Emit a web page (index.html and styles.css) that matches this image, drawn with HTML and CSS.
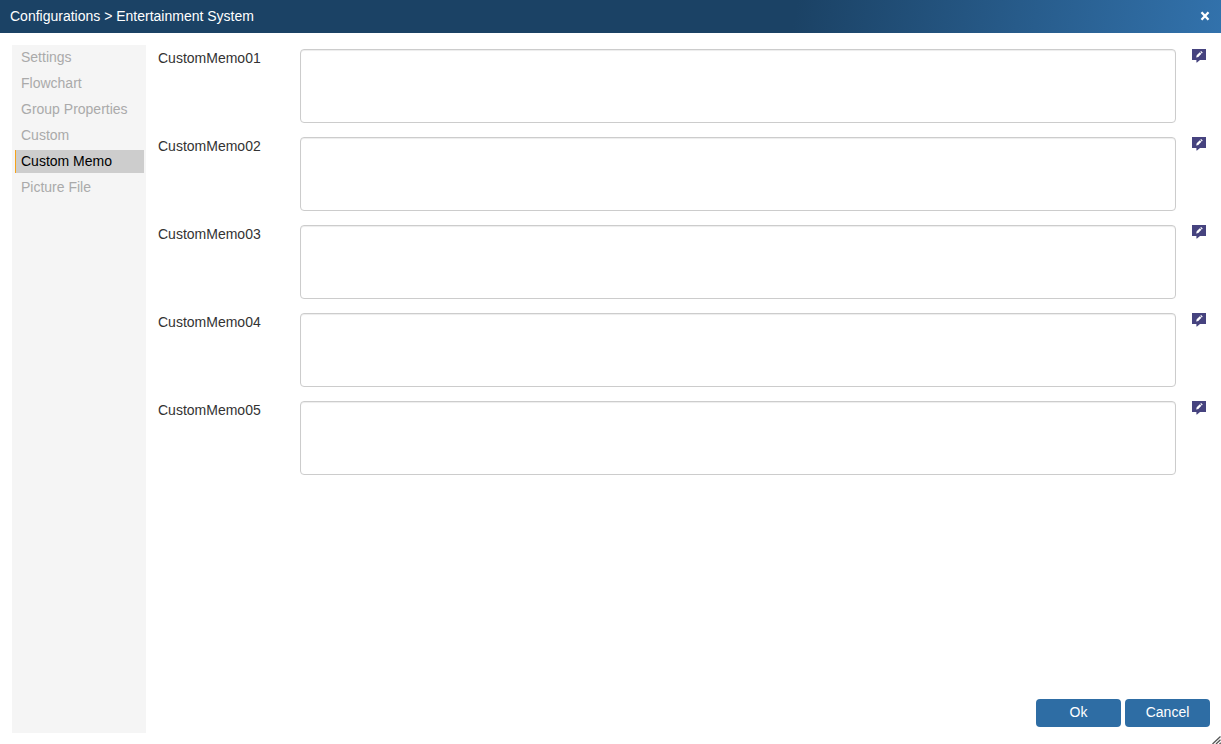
FILE: index.html
```html
<!DOCTYPE html>
<html lang="en">
<head>
<meta charset="utf-8">
<title>Configurations</title>
<link rel="stylesheet" href="styles.css">
</head>
<body>
<svg class="sprite" aria-hidden="true">
  <symbol id="note" viewBox="0 0 14 14">
    <path d="M0 0H14V11H8L5 13.600H4.400V11H0Z" fill="#46437f"/>
    <path d="M4.200 8.400L4.700 6.200L7.800 3.200L9.400 4.800L6.300 7.900ZM8.300 2.800L9.100 2.100L10.700 3.600L9.900 4.400Z" fill="#fff"/>
  </symbol>
</svg>
<div class="dialog">
  <header class="titlebar">
    <h1 class="title">Configurations &gt; Entertainment System</h1>
    <button class="close" type="button" aria-label="Close">
      <svg width="10" height="10" viewBox="0 0 10 10"><path d="M1.500 1.200L8.500 8.800M8.500 1.200L1.500 8.800" stroke="#fff" stroke-width="2.300"/></svg>
    </button>
  </header>
  <div class="content">
    <nav class="sidebar">
      <a class="tab" href="#">Settings</a>
      <a class="tab" href="#">Flowchart</a>
      <a class="tab" href="#">Group Properties</a>
      <a class="tab" href="#">Custom</a>
      <a class="tab active" href="#" aria-current="page">Custom Memo</a>
      <a class="tab" href="#">Picture File</a>
    </nav>
    <form class="form">
      <div class="fields">
        <div class="row"><label class="label" for="m1">CustomMemo01</label><textarea class="memo" id="m1"></textarea><button class="note" type="button" aria-label="Edit note 1"><svg width="14" height="14"><use href="#note"/></svg></button></div>
        <div class="row"><label class="label" for="m2">CustomMemo02</label><textarea class="memo" id="m2"></textarea><button class="note" type="button" aria-label="Edit note 2"><svg width="14" height="14"><use href="#note"/></svg></button></div>
        <div class="row"><label class="label" for="m3">CustomMemo03</label><textarea class="memo" id="m3"></textarea><button class="note" type="button" aria-label="Edit note 3"><svg width="14" height="14"><use href="#note"/></svg></button></div>
        <div class="row"><label class="label" for="m4">CustomMemo04</label><textarea class="memo" id="m4"></textarea><button class="note" type="button" aria-label="Edit note 4"><svg width="14" height="14"><use href="#note"/></svg></button></div>
        <div class="row"><label class="label" for="m5">CustomMemo05</label><textarea class="memo" id="m5"></textarea><button class="note" type="button" aria-label="Edit note 5"><svg width="14" height="14"><use href="#note"/></svg></button></div>
      </div>
      <footer class="actions">
        <button class="btn" type="button">Ok</button>
        <button class="btn" type="button">Cancel</button>
      </footer>
    </form>
  </div>
  <svg class="grip" width="9" height="8" viewBox="0 0 9 8" aria-hidden="true"><path d="M0.500 8L8.500 0.500M4 8L8.500 3.800M7.500 8L8.800 6.800" fill="none" stroke="#555" stroke-width="1.300"/></svg>
</div>
</body>
</html>
```
FILE: styles.css
```css
* {
  box-sizing: border-box;
}

body {
  margin: 0;
  background: #fff;
  color: #333;
  font: 14px/20px "Liberation Sans", Arial, sans-serif;
}

button {
  border: 0;
  padding: 0;
  background: none;
  font: inherit;
  cursor: pointer;
}

svg {
  display: block;
}

.sprite {
  position: absolute;
  width: 0;
  height: 0;
}

.dialog {
  position: relative;
  display: flex;
  flex-direction: column;
  min-height: 100vh;
}

.titlebar {
  display: flex;
  align-items: center;
  justify-content: space-between;
  padding: 6px 11px 7px 10px;
  background: linear-gradient(100deg, #1b4265 0%, #1b4265 65%, #3272ac 100%);
  color: #fff;
}

.title {
  margin: 0;
  font-size: 14px;
  font-weight: normal;
}

.content {
  flex: 1;
  display: flex;
  gap: 12px;
  padding: 12px 11px 11px 12px;
}

.sidebar {
  display: flex;
  flex-direction: column;
  flex: 0 0 134px;
  gap: 3px;
  padding: 1px 2px 0 3px;
  background: #f5f5f5;
}

.tab {
  padding: 0 5px;
  border-left: 1px solid transparent;
  color: #aaa;
  line-height: 23px;
  text-decoration: none;
}

.tab.active {
  border-left-color: #f5a31a;
  background: #cdcdcd;
  color: #000;
}

.form {
  flex: 1;
  display: flex;
  flex-direction: column;
  justify-content: space-between;
  padding: 4px 0 6px;
}

.fields {
  display: flex;
  flex-direction: column;
  gap: 14px;
}

.row {
  display: flex;
  align-items: flex-start;
  padding-right: 4px;
}

.label {
  flex: 0 0 142px;
  line-height: 18px;
}

.memo {
  flex: 1;
  height: 74px;
  margin-right: 16px;
  padding: 6px 12px;
  border: 1px solid #ccc;
  border-radius: 4px;
  box-shadow: inset 0 1px 1px rgba(0, 0, 0, 0.075);
  font: inherit;
  resize: none;
}

.actions {
  display: flex;
  justify-content: flex-end;
  gap: 4px;
}

.btn {
  width: 85px;
  height: 28px;
  padding-bottom: 2px;
  border-radius: 4px;
  background: #2e6da4;
  color: #fff;
}

.grip {
  position: absolute;
  right: 0;
  bottom: 0;
}
```
